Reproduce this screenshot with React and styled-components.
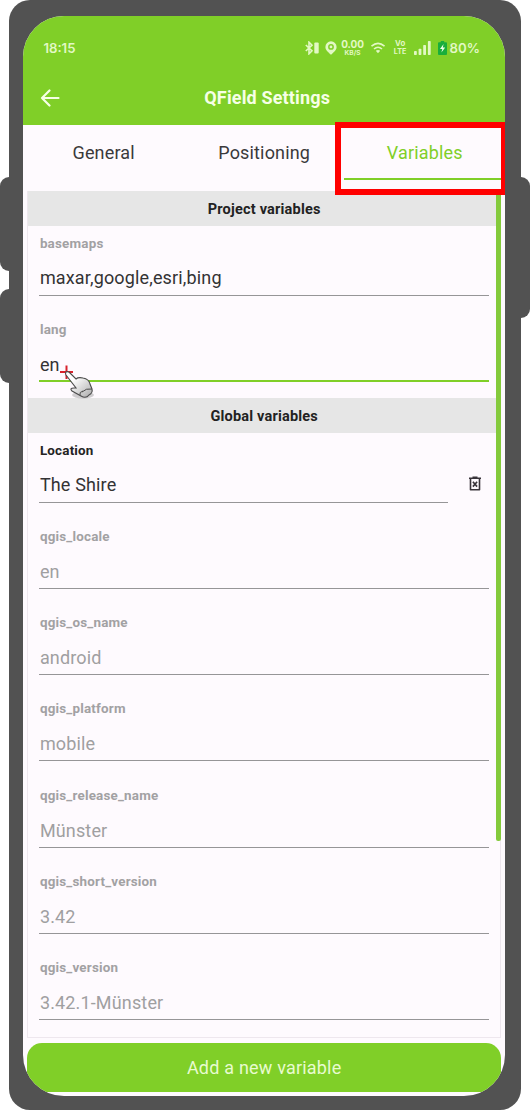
import React from "react";
import styled, { createGlobalStyle } from "styled-components";

const green = "#80cf28";

const GlobalStyle = createGlobalStyle`
  *, *::before, *::after { box-sizing: border-box; }
  body { margin: 0; background: #fff; font-family: Roboto, "Liberation Sans", sans-serif; overflow: hidden; }
`;

const Stage = styled.div`
  position: relative;
  width: 530px;
  height: 1110px;
  padding: 0 9px;
`;

const SideKey = styled.div`
  position: absolute;
  top: ${(p) => p.$top}px;
  ${(p) => p.$side}: 0;
  width: 30px;
  height: ${(p) => p.$height}px;
  border-radius: 9px;
  background: #525252;
`;

const Body = styled.div`
  position: relative;
  height: 1110px;
  padding: 16px 16px 14px 14.4px;
  border-radius: 21px;
  background: #525252;
`;

const Screen = styled.div`
  display: flex;
  flex-direction: column;
  height: 1080px;
  border-radius: 41px;
  overflow: hidden;
  background: #fefafe;
`;

const Header = styled.header`
  flex: none;
  height: 108.5px;
  background: ${green};
  color: #f6ffe6;
`;

const StatusBar = styled.div`
  display: flex;
  align-items: center;
  justify-content: space-between;
  height: 63px;
  padding: 0 25px 0 20px;
  color: #e2f8c4;
`;

const Clock = styled.span`
  font: 600 13.2px/16px Inter, sans-serif;
`;

const StatusIcons = styled.div`
  display: flex;
  align-items: center;
  height: 20px;
`;

const Glyph = styled.svg`
  flex: none;
  display: block;
  margin-right: ${(p) => p.$gap || 0}px;
`;

const Stacked = styled.div`
  display: flex;
  flex-direction: column;
  align-items: center;
  gap: 1px;
  width: ${(p) => p.$width}px;
  margin-right: ${(p) => p.$gap}px;
  font-family: Inter, sans-serif;
  font-weight: 700;
  white-space: nowrap;
`;

const StackedLine = styled.span`
  font-size: ${(p) => p.$size}px;
  line-height: ${(p) => p.$line}px;
`;

const Battery = styled.span`
  font: 600 13.2px/16px Inter, sans-serif;
`;

const TitleBar = styled.div`
  display: grid;
  grid-template-columns: 56px 1fr 56px;
  align-items: center;
  height: 37px;
  padding-left: 17px;
`;

const Title = styled.h1`
  margin: 0 0 0 -11px;
  padding-top: 1px;
  text-align: center;
  font-size: 18px;
  line-height: 24px;
  font-weight: 700;
  letter-spacing: 0.15px;
`;

const Tabs = styled.nav`
  flex: none;
  display: flex;
  height: 66.5px;
`;

const Tab = styled.div`
  flex: 1;
  display: flex;
  justify-content: center;
  height: 55.5px;
  padding-top: 16px;
  font-size: 18px;
  line-height: 24px;
  letter-spacing: 0.15px;
  color: ${(p) => (p.$active ? green : "#3a393b")};
  border-bottom: 2px solid ${(p) => (p.$active ? green : "transparent")};
`;

const Panel = styled.main`
  position: relative;
  flex: none;
  height: 847px;
  margin: 0 4px;
  border: 1px solid #eee7ee;
  border-top: 0;
`;

const ScrollBar = styled.div`
  position: absolute;
  top: 0;
  right: -0.5px;
  width: 5px;
  height: 650px;
  border-radius: 0 0 2px 2px;
  background: #84ca3c;
`;

const SectionTitle = styled.h2`
  height: 34.5px;
  margin: 0;
  background: #e6e6e6;
  color: #222;
  text-align: center;
  font-size: 14.5px;
  line-height: 37px;
  font-weight: 700;
  letter-spacing: 0.2px;
`;

const Row = styled.div`
  display: flex;
  height: 86.3px;
  padding: 9px 11px 0;
`;

const Field = styled.div`
  flex: 1;
`;

const Label = styled.div`
  padding-left: 0.5px;
  font-size: 13.4px;
  line-height: 18px;
  font-weight: 700;
  letter-spacing: 0.2px;
  color: ${(p) => (p.$strong ? "#242424" : "#a2a1a3")};
`;

const Value = styled.div`
  height: ${(p) => (p.$focused ? 43.5 : 43)}px;
  padding: 12.8px 0 0 0.5px;
  font-size: 18px;
  line-height: 26px;
  letter-spacing: 0.15px;
  color: ${(p) => (p.$muted ? "#a09fa1" : "#333234")};
  border-bottom: ${(p) => (p.$focused ? `2px solid ${green}` : "1px solid #969597")};
`;

const DeleteButton = styled.div`
  display: flex;
  justify-content: center;
  width: 41px;
  padding: 34px 0 0 13px;
`;

const AddButton = styled.div`
  flex: none;
  height: 48.5px;
  margin: 5px 4px 0;
  border-radius: 15px;
  background: ${green};
  color: #e8fbd0;
  text-align: center;
  font-size: 18px;
  line-height: 49px;
  letter-spacing: 0.2px;
`;

const Highlight = styled.div`
  position: absolute;
  left: 335px;
  top: 122px;
  width: 170px;
  height: 73px;
  border: 6px solid #f00;
  border-right-width: 4px;
`;

const Pointer = styled.svg`
  position: absolute;
  left: 58px;
  top: 364px;
`;

const projectVariables = [
  { name: "basemaps", value: "maxar,google,esri,bing" },
  { name: "lang", value: "en", focused: true },
];

const globalVariables = [
  { name: "Location", value: "The Shire", removable: true },
  { name: "qgis_locale", value: "en", muted: true },
  { name: "qgis_os_name", value: "android", muted: true },
  { name: "qgis_platform", value: "mobile", muted: true },
  { name: "qgis_release_name", value: "Münster", muted: true },
  { name: "qgis_short_version", value: "3.42", muted: true },
  { name: "qgis_version", value: "3.42.1-Münster", muted: true },
];

function TrashIcon() {
  return (
    <svg width="14" height="16" viewBox="0 0 14 16" fill="none" stroke="#39343a">
      <path d="M1 2.2H13M4.5 1.2H9.5" strokeWidth="1.4" />
      <path d="M2.5 2.5V13.7H11.5V2.5" strokeWidth="1.6" strokeLinejoin="round" />
      <path d="M4.9 5.8L9.1 10.6M9.1 5.8L4.9 10.6" strokeWidth="1.6" />
    </svg>
  );
}

function Variable({ name, value, focused, muted, removable }) {
  return (
    <Row>
      <Field>
        <Label $strong={removable}>{name}</Label>
        <Value $focused={focused} $muted={muted}>{value}</Value>
      </Field>
      {removable && <DeleteButton><TrashIcon /></DeleteButton>}
    </Row>
  );
}

function Status() {
  return (
    <StatusBar>
      <Clock>18:15</Clock>
      <StatusIcons>
        <Glyph $gap={6} width="14" height="14" viewBox="0 0 14 14" fill="none" stroke="currentColor" strokeWidth="1.6">
          <path d="M0.8 4L7 9.8L4 12.8V1.2L7 4.2L0.8 10" />
          <rect x="9.3" y="1.5" width="4.4" height="11" rx="1" fill="currentColor" stroke="none" />
        </Glyph>
        <Glyph $gap={5} width="12" height="14" viewBox="0 0 12 14">
          <path fillRule="evenodd" fill="currentColor" d="M6 0.3A5.6 5.6 0 0 0 0.4 5.9C0.4 9.3 3.5 11 6 13.8C8.500 11 11.6 9.3 11.6 5.9A5.6 5.6 0 0 0 6 0.3ZM6 3A2.9 2.9 0 1 1 6 8.8A2.9 2.9 0 1 1 6 3Z" />
          <circle cx="6" cy="5.9" r="1.4" fill="currentColor" />
        </Glyph>
        <Stacked $width={22} $gap={7}>
          <StackedLine $size={10} $line={9}>0.00</StackedLine>
          <StackedLine $size={6.6} $line={6}>KB/S</StackedLine>
        </Stacked>
        <Glyph $gap={9} width="14" height="12" viewBox="0 0 14 12" fill="none" stroke="currentColor" strokeWidth="1.6">
          <path d="M0.5 4.2Q7 -1.5 13.5 4.2M3 7Q7 3.5 11 7" />
          <path d="M4.8 8.8Q7 7 9.2 8.8L7 11.3Z" fill="currentColor" stroke="none" />
        </Glyph>
        <Stacked $width={13} $gap={7}>
          <StackedLine $size={7.8} $line={7}>Vo</StackedLine>
          <StackedLine $size={7.2} $line={7}>LTE</StackedLine>
        </Stacked>
        <Glyph $gap={7} width="17" height="14" viewBox="0 0 17 14" fill="currentColor">
          <rect x="0" y="10" width="2.8" height="4" rx="0.7" />
          <rect x="4.6" y="7.7" width="2.8" height="6.3" rx="0.7" />
          <rect x="9.2" y="4" width="2.8" height="10" rx="0.7" />
          <rect x="13.9" y="0" width="2.8" height="14" rx="0.7" />
        </Glyph>
        <Glyph $gap={3} width="9" height="14" viewBox="0 0 9 14">
          <path d="M2.8 0H6.2V1.2H8Q9 1.2 9 2.2V13Q9 14 8 14H1Q0 14 0 13V2.2Q0 1.2 1 1.2H2.8Z" fill="#19ae3b" />
          <path d="M5.6 3L2 8H4.3L3.4 11.4L7.2 6.4H4.8Z" fill="#edffe9" />
        </Glyph>
        <Battery>80%</Battery>
      </StatusIcons>
    </StatusBar>
  );
}

export default function App() {
  return (
    <Stage>
      <GlobalStyle />
      <SideKey $side="left" $top={177} $height={93.5} />
      <SideKey $side="left" $top={289} $height={93.5} />
      <SideKey $side="right" $top={177} $height={141} />
      <Body>
        <Screen>
          <Header>
            <Status />
            <TitleBar>
              <svg width="20" height="18" viewBox="0 0 20 18" fill="none" stroke="currentColor" strokeWidth="2.2" strokeLinecap="round" strokeLinejoin="round">
                <path d="M18.500 9H2M9.500 1.500L2 9L9.500 16.500" />
              </svg>
              <Title>QField Settings</Title>
            </TitleBar>
          </Header>
          <Tabs>
            <Tab>General</Tab>
            <Tab>Positioning</Tab>
            <Tab $active>Variables</Tab>
          </Tabs>
          <Panel>
            <SectionTitle>Project variables</SectionTitle>
            {projectVariables.map((v) => <Variable key={v.name} {...v} />)}
            <SectionTitle>Global variables</SectionTitle>
            {globalVariables.map((v) => <Variable key={v.name} {...v} />)}
            <ScrollBar />
          </Panel>
          <AddButton>Add a new variable</AddButton>
        </Screen>
      </Body>
      <Highlight />
      <Pointer width="42" height="40" viewBox="0 0 42 40">
        <defs>
          <linearGradient id="hand" x1="0" y1="0" x2="1" y2="1">
            <stop offset="0.3" stopColor="#fff" />
            <stop offset="1" stopColor="#aaa" />
          </linearGradient>
        </defs>
        <ellipse cx="25" cy="31" rx="11" ry="3.5" fill="#777" opacity="0.35" />
        <path d="M2 8H15M8.500 1.500V15" stroke="#d8222c" strokeWidth="2" />
        <path d="M8 8Q10 7 12 9L18 15Q20 13 25 14Q31 15 32 20L34 25Q35 29 31 31Q28 35 23 32L14 27Q11 24 16 24L18 24L8 11Q7 9 8 8Z" fill="url(#hand)" stroke="#4b4b4b" strokeWidth="1.1" />
        <path d="M24 28Q28 24 34 25M22 31Q21 28 25 27" fill="none" stroke="#4b4b4b" />
      </Pointer>
    </Stage>
  );
}
